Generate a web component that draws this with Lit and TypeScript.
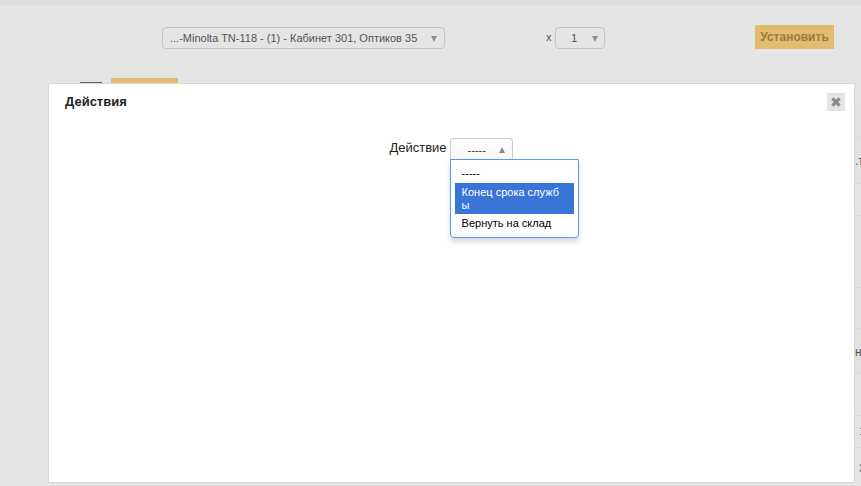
import { LitElement, html, css } from "lit";
import { customElement } from "lit/decorators.js";

@customElement("app-root")
export class AppRoot extends LitElement {
  static styles = css`
    :host { display: block; width: 861px; height: 486px; position: relative; overflow: hidden; background: #e4e4e4; font-family: "Liberation Sans", Arial, sans-serif; color: #222; }
    .strip { height: 4px; background: #dfdeda; border-bottom: 1px solid #dcdcdc; }
    .toolbar { display: flex; align-items: center; height: 66px; padding: 0 27px 0 162px; }
    .sel { box-sizing: border-box; display: flex; align-items: center; height: 22px; border: 1px solid #c4c4c4; border-radius: 4px; background: #e4e4e4; color: #555; font-size: 11px; }
    .sel.main { width: 283px; padding: 0 7px; justify-content: space-between; white-space: nowrap; }
    .x { margin-left: 101px; width: 9px; font-size: 11px; color: #555; margin-top: -2px; }
    .sel.qty { width: 50px; padding: 0 6px 0 15px; justify-content: space-between; font-size: 11.5px; }
    .tri { width: 0; height: 0; border-left: 3.5px solid transparent; border-right: 3.5px solid transparent; border-top: 6px solid #8e8e8e; margin-top: 2px; }
    .go { margin-left: auto; width: 79px; height: 24px; line-height: 24px; text-align: center; background: #e2bc6e; color: #9b7b3f; font-weight: 700; font-size: 12px; margin-top: -2px; }
    .tabs { display: flex; align-items: flex-start; height: 20px; padding: 7px 0 0 80px; gap: 9px; }
    .t1 { width: 22px; height: 2px; background: #666; margin-top: 4px; }
    .t2 { width: 67px; height: 6px; background: #e2bc6e; }
    .edge { position: absolute; top: 105px; left: 855px; width: 6px; height: 381px; }
    .row { box-sizing: border-box; border-bottom: 1px solid #d9d9d9; font-size: 11px; color: #555; white-space: nowrap; overflow: hidden; line-height: 12px; }
    .h { font-size: 12px; }
    .n { padding-left: 4px; }
    .r1 { height: 33px; background: #e1e1e1; }
    .r2 { height: 46px; padding-top: 17px; background: #e1e1e1; }
    .r3 { height: 32px; }
    .r4 { height: 72px; background: #e2e2e2; }
    .r5 { height: 41px; background: #e1e1e1; }
    .r6 { height: 45px; padding-top: 17px; background: #e1e1e1; }
    .r7 { height: 42px; }
    .r8 { height: 32px; padding-top: 9px; }
    .r9 { height: 38px; padding-top: 14px; border: none; }
    .dialog { position: absolute; box-sizing: border-box; left: 48px; top: 83px; width: 807px; height: 400px; background: #fff; border: 1px solid #d8d8d8; }
    .title { position: absolute; left: 16px; top: 10px; font-weight: 700; font-size: 13px; color: #222; }
    .close { position: absolute; right: 9px; top: 9px; width: 18px; height: 18px; background: #e4e4e4; display: flex; align-items: center; justify-content: center; }
    .field { display: flex; justify-content: center; align-items: flex-start; padding: 54px 0 0 0; margin-right: 1px; }
    .label { font-size: 13px; line-height: 20px; margin-right: 3px; color: #222; }
    .combo { position: relative; width: 63px; }
    .box { box-sizing: border-box; display: flex; align-items: center; justify-content: space-between; width: 63px; height: 22px; padding: 0 7px 0 17px; border: 1px solid #ccc; border-bottom: none; border-radius: 4px 4px 0 0; font-size: 11px; color: #333; background: linear-gradient(#fff, #f6f6f6); }
    .up { width: 0; height: 0; border-left: 3.5px solid transparent; border-right: 3.5px solid transparent; border-bottom: 6px solid #888; }
    .menu { position: absolute; box-sizing: border-box; left: 0; top: 21px; width: 129px; height: 79px; padding: 5px 4px; background: #fff; border: 1px solid #5897fb; border-radius: 0 0 4px 4px; box-shadow: 0 4px 5px rgba(0,0,0,.15); font-size: 11px; line-height: 13px; }
    .opt { padding: 0 7px; color: #000; }
    .opt.a { background: #3875d7; color: #fff; padding: 3px 7px 2px; height: 31px; box-sizing: border-box; word-break: break-all; }
    .opt.first { height: 18px; box-sizing: border-box; padding-top: 2px; }
    .opt.last { padding-top: 3px; }
  `;

  render() {
    return html`
      <div class="strip"></div>
      <div class="toolbar">
        <div class="sel main"><span>...-Minolta TN-118 - (1) - Кабинет 301, Оптиков 35</span><i class="tri"></i></div>
        <span class="x">x</span>
        <div class="sel qty"><span>1</span><i class="tri"></i></div>
        <div class="go">Установить</div>
      </div>
      <div class="tabs"><i class="t1"></i><i class="t2"></i></div>
      <div class="edge">
        <div class="row r1"></div>
        <div class="row r2 h">.т</div>
        <div class="row r3"></div>
        <div class="row r4"></div>
        <div class="row r5"></div>
        <div class="row r6 h">н</div>
        <div class="row r7"></div>
        <div class="row r8 n">1</div>
        <div class="row r9 n">3</div>
      </div>
      <section class="dialog">
        <div class="title">Действия</div>
        <div class="close">
          <svg width="12" height="12" viewBox="0 0 12 12"><path d="M2.4 2.4 9.6 9.6M9.6 2.4 2.4 9.6" stroke="#8a8a8a" stroke-width="3.2"/></svg>
        </div>
        <div class="field">
          <span class="label">Действие</span>
          <div class="combo">
            <div class="box"><span>-----</span><i class="up"></i></div>
            <div class="menu">
              <div class="opt first">-----</div>
              <div class="opt a">Конец срока службы</div>
              <div class="opt last">Вернуть на склад</div>
            </div>
          </div>
        </div>
      </section>
    `;
  }
}
